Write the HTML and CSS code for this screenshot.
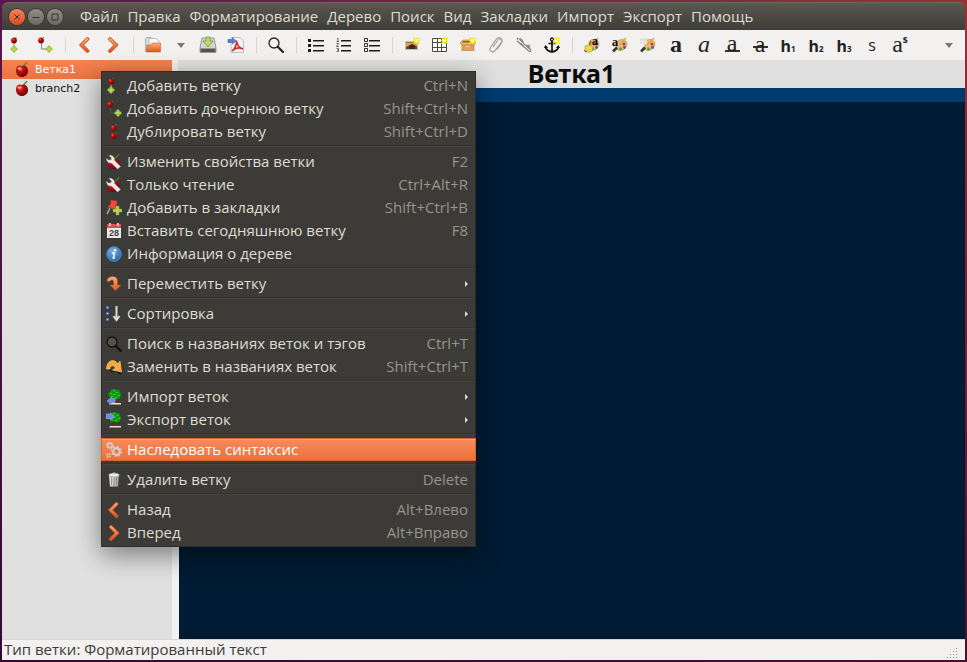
FILE: index.html
```html
<!DOCTYPE html>
<html lang="ru">
<head>
<meta charset="utf-8">
<title>Ветка1</title>
<link rel="stylesheet" href="styles.css">
</head>
<body>
<svg class="sprite" aria-hidden="true">
  <defs>
    <radialGradient id="red" cx=".35" cy=".3" r=".75"><stop offset="0" stop-color="#f05a50"/><stop offset=".35" stop-color="#c01010"/><stop offset="1" stop-color="#6c0000"/></radialGradient>
    <linearGradient id="orange" x1="0" y1="0" x2="0" y2="1"><stop offset="0" stop-color="#f9b27c"/><stop offset="1" stop-color="#e0521c"/></linearGradient>
    <linearGradient id="steel" x1="0" y1="0" x2="1" y2="0"><stop offset="0" stop-color="#e8e8e8"/><stop offset="1" stop-color="#9a9a9a"/></linearGradient>
    <radialGradient id="blue" cx=".4" cy=".3" r=".8"><stop offset="0" stop-color="#7db4e6"/><stop offset="1" stop-color="#1f5fa8"/></radialGradient>
  </defs>
  <symbol id="cherry" viewBox="0 0 16 16"><path d="M8 5Q10 4 13 0" fill="none" stroke="#4f8f28" stroke-width="1.500"/><path d="M8 4.200C4 2.400 2 5 2 9c0 3.400 2.500 6 5.900 6S14 12.500 14 9C14 5.500 11.500 2.800 8 4.200z" fill="url(#red)"/><ellipse cx="5.500" cy="6.500" rx="2" ry="1.200" fill="#fff" opacity=".5"/></symbol>
  <symbol id="plus" viewBox="0 0 8 8"><path d="M3 1h2v2h2v2H5v2H3V5H1V3h2z" fill="#b7db55" stroke="#9cc246"/></symbol>
  <symbol id="add" viewBox="0 0 16 16"><path d="M5 6v5" stroke="#999"/><path d="M5 2.500 7.500 0" stroke="#3f8a1c"/><circle cx="5" cy="3.500" r="2.900" fill="url(#red)"/><use href="#plus" x="1" y="8" width="8" height="8"/></symbol>
  <symbol id="add-child" viewBox="0 0 16 16"><path d="M4.500 6v6H9" fill="none" stroke="#888"/><path d="M4.500 2.500 7 0" stroke="#3f8a1c"/><circle cx="4" cy="3.500" r="2.900" fill="url(#red)"/><use href="#plus" x="8" y="8" width="8" height="8"/></symbol>
  <symbol id="add-child-dark" viewBox="0 0 16 16"><path d="M4.500 6v6H9" fill="none" stroke="#55534d"/><path d="M4.500 2.500 7 0" stroke="#3f8a1c"/><circle cx="4" cy="3.500" r="2.900" fill="url(#red)"/><use href="#plus" x="8" y="8" width="8" height="8"/></symbol>
  <symbol id="dup" viewBox="0 0 16 16"><path d="M8 3l3-3M8 11l3-3" stroke="#3f8a1c"/><circle cx="7.500" cy="4" r="3" fill="url(#red)"/><circle cx="7.500" cy="12" r="3" fill="url(#red)"/></symbol>
  <symbol id="wrench" viewBox="0 0 16 16"><path d="M9 5l4-5" stroke="#3f8a1c" stroke-width="1.300"/><circle cx="7.500" cy="9.500" r="5.800" fill="url(#red)"/><path d="M3 1.500 5.500 4 5 6 2.500 6 .5 4.500c0 3.500 2.500 5 5 4.500l6 6 3-2.500-6-6C9 3.500 6 .5 3 1.500z" fill="#ecece9" stroke="#aaa" stroke-width=".5"/></symbol>
  <symbol id="pin" viewBox="0 0 16 16"><path d="M4 8 1 14" stroke="#aaa" stroke-width="1.500"/><path d="M5 0l6 1v3L9.500 5.500 11 10 1.500 7l3-2.500z" fill="#f04a42" stroke="#b72a28" stroke-width=".5"/><path d="M10 6h3v3h3v3h-3v3h-3v-3H7V9h3z" fill="#b2d452" stroke="#7fa52f" stroke-width=".5"/></symbol>
  <symbol id="info" viewBox="0 0 16 16"><circle cx="8" cy="8" r="7.300" fill="url(#blue)" stroke="#4f87c0" stroke-width="1"/><circle cx="9.200" cy="4.200" r="1.200" fill="#fff"/><path d="M6 7h2.500l-1.200 5h1.700" fill="none" stroke="#fff" stroke-width="1.500"/></symbol>
  <symbol id="move" viewBox="0 0 16 16"><path d="M1 5C1-1 12-1 11.500 5v4H15l-5.500 6L4 9h3.500V6C7.500 3 4 3.500 3.500 6z" fill="url(#orange)" stroke="#a9441b" stroke-width=".5"/></symbol>
  <symbol id="sort" viewBox="0 0 16 16"><path d="M0 0h3v3H0zM0 6h3v3H0zM0 12h3v3H0z" fill="#3f6bc0"/><path d="M1 1h1v1H1zM1 7h1v1H1zM1 13h1v1H1z" fill="#fff"/><path d="M10.500 0v13M7.500 10l3 4 3-4" fill="none" stroke="#dcdcd6" stroke-width="2"/></symbol>
  <symbol id="search" viewBox="0 0 16 16"><circle cx="6" cy="6" r="5" fill="#fff" fill-opacity=".12" stroke="currentColor" stroke-width="1.300"/><path d="M10 10l5 5" stroke="currentColor" stroke-width="2.200" stroke-linecap="round"/></symbol>
  <symbol id="replace" viewBox="0 0 16 16"><circle cx="7" cy="8" r="4.500" fill="none" stroke="#111" stroke-width="1.200"/><path d="M10 11l5 4" stroke="#111" stroke-width="2"/><path d="M.5 10C1 1 8-1 12 5l2-3 1.500 11-9-2 3-2C8 6 4 6 4 10z" fill="#f9a83a" stroke="#ffd47e" stroke-width=".6"/></symbol>
  <symbol id="tree" viewBox="0 0 16 16"><path d="M4 14h11v1.500H3z" fill="#e8e5c0"/><path d="M9 6l-.5 8h3.500l-1.500-3z" fill="#6b2f14"/><path d="M3 7 2 4l2-1 1-2 3-1 3 1h2l1 2 1 3-1 3-3 1.500-3-1-3 1z" fill="#0a9a12"/><path d="M4 4h2v1H4zM7 1h2v1H7zM10 3h2v1h-2zM7 5h3v1H7zM12 6h2v1h-2zM5 7h2v1H5zM9 8h2v1H9z" fill="#32cf32"/></symbol>
  <symbol id="import" viewBox="0 0 16 16"><use href="#tree"/><path d="M9 9.500H5.500V8.500L1 12l4.500 3v-1.500H9z" fill="#6d8be4" stroke="#8fa8ee" stroke-width=".7"/></symbol>
  <symbol id="export" viewBox="0 0 16 16"><use href="#tree"/><path d="M0 2h4.500V1l4 3.500-4 3V6.500H0z" fill="#6d8be4" stroke="#8fa8ee" stroke-width=".7"/></symbol>
  <symbol id="gears" viewBox="0 0 16 16"><g fill="none" stroke="#d4d1cc"><circle cx="4" cy="3.500" r="2.300" stroke-width="1.600"/><circle cx="4" cy="3.500" r="3.400" stroke-width="1" stroke-dasharray="1.300 1.300"/><circle cx="10.500" cy="9.500" r="3.300" stroke-width="2.200"/><circle cx="10.500" cy="9.500" r="5" stroke-width="1.200" stroke-dasharray="2 1.900"/><circle cx="2.500" cy="13.500" r="1.600" stroke-width="1.600" stroke-dasharray="1.500 .8"/></g></symbol>
  <symbol id="trash" viewBox="0 0 16 16"><path d="M3 3.500h10l-1 11H4z" fill="url(#steel)"/><path d="M5.500 5v8M8 6v8M10.500 5v8" stroke="#888" stroke-width=".8"/><ellipse cx="8" cy="3" rx="5.300" ry="1.800" fill="#eee" stroke="#999" stroke-width=".5"/><path d="M6 1.800q2-2 4 0" fill="none" stroke="#ccc"/></symbol>
  <symbol id="left" viewBox="0 0 16 16"><path d="M10.500 2 4.500 8l6 6" fill="none" stroke="#cf5a26" stroke-width="3.800" stroke-linecap="round"/><path d="M10.500 2 4.500 8l6 6" fill="none" stroke="url(#orange)" stroke-width="1.800" stroke-linecap="round"/></symbol>
  <symbol id="right" viewBox="0 0 16 16"><path d="M5 2l6 6-6 6" fill="none" stroke="#cf5a26" stroke-width="3.800" stroke-linecap="round"/><path d="M5 2l6 6-6 6" fill="none" stroke="url(#orange)" stroke-width="1.800" stroke-linecap="round"/></symbol>
  <symbol id="star" viewBox="0 0 8 8"><path d="M4 0l1 2 2.500-1.500L6.200 3 8 4 6.200 5l1.300 2.500L5 6.200 4 8 3 6.200.5 7.500 1.800 5 0 4l1.800-1L.5.5 3 2z" fill="#f0ea20" stroke="#f0ea20" stroke-width=".8"/><circle cx="4" cy="4" r="1.700" fill="#fffec8"/></symbol>
  <symbol id="palette" viewBox="0 0 16 16"><path d="M5 5C7 1 15 2 15 7c0 6-9 9-11 4-.5-2 2-2 1-6z" fill="#e3bb77" stroke="#b78b43" stroke-width=".6"/><circle cx="8.500" cy="12" r="1.400" fill="#45a52b"/><circle cx="12.500" cy="10.500" r="1.400" fill="#2865c8"/><circle cx="12" cy="7" r="1.500" fill="#e22c16"/><path d="M14 1 7 8" stroke="#e0a04c" stroke-width="1.400"/><path d="M5 10.500 1 14.500" stroke="#373736" stroke-width="2.600"/></symbol>
</svg>

<div class="window">
  <header class="titlebar">
    <div class="controls">
      <button class="ctl close" aria-label="Закрыть"><svg viewBox="0 0 16 16"><path d="M5.500 5.500l5 5M10.500 5.500l-5 5"/></svg></button>
      <button class="ctl" aria-label="Свернуть"><svg viewBox="0 0 16 16"><path d="M4.500 8.500h7"/></svg></button>
      <button class="ctl" aria-label="Развернуть"><svg viewBox="0 0 16 16"><path d="M5 5h6v6H5z"/></svg></button>
    </div>
    <nav class="menubar">
      <button>Файл</button><button>Правка</button><button>Форматирование</button><button>Дерево</button><button>Поиск</button><button>Вид</button><button>Закладки</button><button>Импорт</button><button>Экспорт</button><button>Помощь</button>
    </nav>
  </header>

  <div class="toolbar">
    <button aria-label="Добавить ветку"><svg><use href="#add"/></svg></button>
    <button aria-label="Добавить дочернюю ветку"><svg><use href="#add-child"/></svg></button>
    <i class="sep"></i>
    <button aria-label="Назад"><svg><use href="#left"/></svg></button>
    <button aria-label="Вперед"><svg><use href="#right"/></svg></button>
    <i class="sep"></i>
    <button aria-label="Открыть"><svg viewBox="0 0 16 16"><path d="M.5 14V1.500L2 .5h4L7 2h2v12z" fill="#dddbd6" stroke="#999" stroke-width=".7"/><path d="M4 1.500h7l3 2.500v8H4z" fill="#fafafa" stroke="#aaa" stroke-width=".7"/><path d="M2 8h4l1-2h8.500V15H1z" fill="url(#orange)" stroke="#c9622c" stroke-width=".6"/></svg></button>
    <button class="drop" aria-label="Недавние документы"><i class="caret"></i></button>
    <button aria-label="Сохранить"><svg viewBox="0 0 16 16"><path d="M2 1h12l2 10v4.500H0V11z" fill="#d4d4d4" stroke="#777" stroke-width=".7"/><path d="M.5 11.500h15v3.500H.5z" fill="#555"/><path d="M6 0h4v4h3l-5 6-5-6h3z" fill="#b9df69" stroke="#69912e" stroke-width=".7"/></svg></button>
    <button aria-label="Экспорт в PDF"><svg viewBox="0 0 16 16"><path d="M3 .5h9L15.500 4v11.500H3z" fill="#f3f3f3" stroke="#aaa" stroke-width=".7"/><path d="M4 14C7 12 9 7 8.500 3.500 9 8 11 11 15 12 11 10 7 11 4 14z" fill="none" stroke="#d52a26" stroke-width="1.600"/><path d="M0 2.500h4.500V.5L8 4 4.500 7V5.500H0z" fill="#567bd0" stroke="#3253a0" stroke-width=".5"/></svg></button>
    <i class="sep"></i>
    <button aria-label="Поиск"><svg><use href="#search"/></svg></button>
    <i class="sep"></i>
    <button aria-label="Маркированный список"><svg viewBox="0 0 16 16"><path d="M0 2h3v3H0zM0 7h3v3H0zM0 12h3v3H0zM5 3h11v1.500H5zM5 8h11v1.500H5zM5 13h11v1.500H5z" fill="#1c1c1c"/></svg></button>
    <button aria-label="Нумерованный список"><svg viewBox="0 0 16 16"><path d="M5 3h10v1.500H5zM5 8h10v1.500H5zM5 13h10v1.500H5z" fill="#1c1c1c"/><path d="M1 1.500h1v3M.5 4.500h2.500M.5 6.500h2l-2 3h2.500M.5 11.500h2v3h-2M1 13h1.500" fill="none" stroke="#444" stroke-width=".8"/></svg></button>
    <button aria-label="Список задач"><svg viewBox="0 0 16 16"><path d="M.5 1.500h3v3h-3zM.5 6.500h3v3h-3zM.5 11.500h3v3h-3z" fill="none" stroke="#333"/><path d="M5 3h11v1.500H5zM5 8h11v1.500H5zM5 13h11v1.500H5z" fill="#1c1c1c"/></svg></button>
    <i class="sep"></i>
    <button aria-label="Вставить изображение"><svg viewBox="0 0 16 16"><path d="M1.500 4.500h12v8h-12z" fill="#5d4a30" stroke="#c4c0b8"/><path d="M2 5.500h11v4L8 7 2 10z" fill="#e5a048"/><path d="M5 12V9l3-2 3 1.500V12z" fill="#3b2c1d"/><use href="#star" x="9" y="0" width="7" height="7"/></svg></button>
    <button aria-label="Вставить таблицу"><svg viewBox="0 0 16 16"><path d="M.5 1.500h14v13H.500zM.5 5.500h14M.5 10.500h14M5.500 1.500v13M9.500 1.500v13" fill="#fff" stroke="#4a4a4a"/><use href="#star" x="9" y="0" width="7" height="7"/></svg></button>
    <button aria-label="Вставить блок кода"><svg viewBox="0 0 16 16"><path d="M2 7h12v6.500H2z" fill="#dfa355" stroke="#a86720" stroke-width=".5"/><path d="M0 6l3-3h10l3 3-2 2H2z" fill="#edb869" stroke="#b9762d" stroke-width=".6"/><path d="M3 4h10v1.500H2z" fill="#985d20"/><path d="M6 9h4v1H6z" fill="#f7dca8"/><use href="#star" x="9" y="0" width="7" height="7"/></svg></button>
    <button aria-label="Вложить файл"><svg viewBox="0 0 16 16"><path d="M5 10l5-7c2-2.500 5 0 3 2.500L7 13.500c-3 3-6.500 0-4.500-3L8.500 2c3-3 7 0 5 4l-4.500 6.500" fill="none" stroke="#a3a3a3" stroke-width="1.200"/></svg></button>
    <button aria-label="Вставить ссылку"><svg viewBox="0 0 16 16"><path d="M1 1l14 12M1 4l13 11M4 1l2 6 7 3 2 5M1 2l5 1 2 5 6 1" fill="none" stroke="#8a8a8a" stroke-width="1.500"/><path d="M2 2l12 12" stroke="#eee" stroke-width="1"/></svg></button>
    <button aria-label="Вставить якорь"><svg viewBox="0 0 16 16"><circle cx="8" cy="2.500" r="1.500" fill="none" stroke="#111" stroke-width="1.300"/><path d="M8 4v10.500M4.500 6.500h7M1.500 10C2.500 14 6 14.500 8 15c2-.5 5.500-1 6.500-5" fill="none" stroke="#111" stroke-width="1.700"/><path d="M0 11l1.500-3 2.500 3zM12 11l2.500-3 1.500 3z"/><use href="#star" x="9" y="0" width="7" height="7"/></svg></button>
    <i class="sep"></i>
    <button aria-label="Очистить форматирование"><svg viewBox="0 0 16 16"><use href="#palette"/><path d="M7 4 5 9" stroke="#8a6516" stroke-width="1.500"/><path d="M1 9l4-1 4 2-1 4-3 1.500-4-2z" fill="#ead64a" stroke="#b49a25" stroke-width=".6"/><text x="8" y="8" class="mini">a</text></svg></button>
    <button aria-label="Цвет текста"><svg viewBox="0 0 16 16"><use href="#palette"/><text x="0" y="9" class="mini">a</text></svg></button>
    <button aria-label="Цвет фона"><svg viewBox="0 0 16 16"><use href="#palette"/><path d="M0 1h7v6H0z" fill="#e4e3dc"/></svg></button>
    <button class="glyph bold" aria-label="Полужирный">a</button>
    <button class="glyph italic" aria-label="Курсив">a</button>
    <button class="glyph under" aria-label="Подчёркнутый">a</button>
    <button class="glyph strike" aria-label="Зачёркнутый">a</button>
    <button class="head">h<small>1</small></button>
    <button class="head">h<small>2</small></button>
    <button class="head">h<small>3</small></button>
    <button class="small">s</button>
    <button class="glyph super">a<sup>s</sup></button>
    <button class="drop more" aria-label="Ещё"><i class="caret"></i></button>
  </div>

  <main class="body">
    <aside class="tree">
      <div class="node active"><svg><use href="#cherry"/></svg>Ветка1</div>
      <div class="node"><svg><use href="#cherry"/></svg>branch2</div>
    </aside>
    <section class="editor">
      <h1>Ветка1</h1>
      <div class="line"></div>
      <div class="page"></div>
    </section>
  </main>

  <footer class="status">
    <span>Тип ветки: Форматированный текст</span>
    <svg class="grip" viewBox="0 0 12 12"><path d="M9 0h1v1H9zM6 3h1v1H6zM9 3h1v1H9zM3 6h1v1H3zM6 6h1v1H6zM9 6h1v1H9zM0 9h1v1H0zM3 9h1v1H3zM6 9h1v1H6zM9 9h1v1H9z"/></svg>
  </footer>
</div>

<div class="popup" role="menu">
  <button><svg><use href="#add"/></svg><span>Добавить ветку</span><kbd>Ctrl+N</kbd></button>
  <button><svg><use href="#add-child-dark"/></svg><span>Добавить дочернюю ветку</span><kbd>Shift+Ctrl+N</kbd></button>
  <button><svg><use href="#dup"/></svg><span>Дублировать ветку</span><kbd>Shift+Ctrl+D</kbd></button>
  <hr>
  <button><svg><use href="#wrench"/></svg><span>Изменить свойства ветки</span><kbd>F2</kbd></button>
  <button><svg><use href="#wrench"/></svg><span>Только чтение</span><kbd>Ctrl+Alt+R</kbd></button>
  <button><svg><use href="#pin"/></svg><span>Добавить в закладки</span><kbd>Shift+Ctrl+B</kbd></button>
  <button><svg viewBox="0 0 16 16"><path d="M1 1h14v14H1z" fill="#e9e9e9"/><path d="M1 1h14v4H1z" fill="#d9504c"/><path d="M4 0v3M12 0v3" stroke="#eee" stroke-width="1.500"/><text x="8" y="13" text-anchor="middle" class="cal-day">28</text></svg><span>Вставить сегодняшнюю ветку</span><kbd>F8</kbd></button>
  <button><svg><use href="#info"/></svg><span>Информация о дереве</span></button>
  <hr>
  <button><svg><use href="#move"/></svg><span>Переместить ветку</span><i class="arrow"></i></button>
  <hr>
  <button><svg><use href="#sort"/></svg><span>Сортировка</span><i class="arrow"></i></button>
  <hr>
  <button><svg><use href="#search"/></svg><span>Поиск в названиях веток и тэгов</span><kbd>Ctrl+T</kbd></button>
  <button><svg><use href="#replace"/></svg><span>Заменить в названиях веток</span><kbd>Shift+Ctrl+T</kbd></button>
  <hr>
  <button><svg><use href="#import"/></svg><span>Импорт веток</span><i class="arrow"></i></button>
  <button><svg><use href="#export"/></svg><span>Экспорт веток</span><i class="arrow"></i></button>
  <hr>
  <button class="hover"><svg><use href="#gears"/></svg><span>Наследовать синтаксис</span></button>
  <hr>
  <button><svg><use href="#trash"/></svg><span>Удалить ветку</span><kbd>Delete</kbd></button>
  <hr>
  <button><svg><use href="#left"/></svg><span>Назад</span><kbd>Alt+Влево</kbd></button>
  <button><svg><use href="#right"/></svg><span>Вперед</span><kbd>Alt+Вправо</kbd></button>
</div>
</body>
</html>
```
FILE: styles.css
```css
* { box-sizing: border-box; }
body {
  margin: 0;
  height: 100vh;
  padding: 2px;
  background: linear-gradient(rgba(40, 0, 45, 0), rgba(40, 0, 45, .7)), linear-gradient(90deg, #57184c, #7c2740 60%, #9b2f33);
  font: 15px/20px "Open Sans", "Noto Sans", sans-serif;
  color: #3c3b37;
  overflow: hidden;
}
button {
  margin: 0;
  padding: 0;
  border: 0;
  background: none;
  font: inherit;
  color: inherit;
}
.sprite { position: absolute; width: 0; height: 0; }

.window { display: flex; flex-direction: column; height: 100%; }

.titlebar {
  flex: none;
  display: flex;
  align-items: center;
  height: 28px;
  padding-left: 7px;
  border-top: 1px solid #6b685f;
  border-radius: 6px 6px 0 0;
  background: linear-gradient(#5a5850, #3d3c37);
}
.controls { display: flex; gap: 3px; }
.ctl {
  width: 16px;
  height: 16px;
  border-radius: 50%;
  background: linear-gradient(#8f8d85, #6b6962);
  box-shadow: 0 0 0 1px #38372f;
}
.ctl.close { background: linear-gradient(#f5835d, #dd4a1e); }
.ctl svg { display: block; width: 16px; height: 16px; fill: none; stroke: #35342f; stroke-width: 1; }
.menubar { display: flex; gap: 9px; margin-left: 17px; padding-bottom: 2px; color: #dfdbd2; }

.toolbar {
  flex: none;
  display: flex;
  align-items: center;
  height: 30px;
  padding-left: 1px;
  background: #f2f1f0;
  color: #222;
}
.toolbar button {
  flex: 0 1 28px;
  height: 28px;
  display: flex;
  align-items: center;
  justify-content: center;
}
.toolbar svg { width: 16px; height: 16px; overflow: visible; }
.sep {
  width: 12px;
  height: 16px;
  background: linear-gradient(#d8d6d3, #d8d6d3) center / 1px 100% no-repeat;
}
.toolbar .drop { flex-basis: 27px; }
.toolbar .more { margin-left: auto; margin-right: 3px; }
.caret {
  border: 4px solid transparent;
  border-top: 5px solid #777;
  border-bottom: 0;
}
.toolbar .glyph { font: 24px/24px "Liberation Serif", serif; padding-bottom: 2px; }
.toolbar .bold { font-weight: bold; }
.toolbar .italic { font-style: italic; }
.toolbar .under {
  padding-bottom: 4px;
  background: linear-gradient(#333, #333) center 19px / 15px 2px no-repeat;
}
.toolbar .strike { background: linear-gradient(#333, #333) center 15px / 15px 2px no-repeat; }
.toolbar .head { font: bold 16px/20px "Noto Sans", sans-serif; align-items: baseline; padding-top: 5px; }
.head small { font-size: 8px; }
.toolbar .small { font-size: 16px; }
.super sup { align-self: flex-start; font: bold 10px/16px "Noto Sans", sans-serif; }
.mini { font: bold 12px "Liberation Serif", serif; }
.cal-day { font: bold 9px "Liberation Sans", sans-serif; fill: #444; }

.body { flex: 1; display: flex; min-height: 0; background: #f2f1f0; }
.tree {
  flex: 0 0 170px;
  background: #e0e0e0;
  font: 11px/19px "DejaVu Sans", sans-serif;
  color: #111;
}
.node { display: flex; align-items: center; gap: 5px; height: 19px; padding-left: 12px; }
.node svg { width: 16px; height: 16px; }
.node.active { background: linear-gradient(#f58350, #ec7240); color: #fff; }
.editor { flex: 1; display: flex; flex-direction: column; margin-left: 6px; }
.editor h1 {
  margin: 0;
  height: 28px;
  background: #e0e0e0;
  font: bold 25px/26px "Noto Sans", sans-serif;
  color: #0b0b0b;
  text-align: center;
}
.line { height: 14px; margin-left: 1px; background: #003b70; }
.page { flex: 1; margin-left: 1px; background: #001b33; }

.status {
  flex: none;
  display: flex;
  align-items: center;
  justify-content: space-between;
  height: 21px;
  padding: 0 6px 0 2px;
  border-top: 1px solid #d8d6d3;
  background: #f2f1f0;
}
.status span { padding-bottom: 2px; }
.grip { width: 12px; height: 12px; align-self: flex-end; fill: #8a8883; }

.popup {
  position: absolute;
  left: 101px;
  top: 71px;
  width: 375px;
  padding: 2px 0;
  border: 1px solid #2e2d29;
  background: #3c3b37;
  color: #dfdbd2;
  box-shadow: 0 8px 24px rgba(0, 0, 0, .45);
}
.popup button {
  display: flex;
  align-items: center;
  gap: 5px;
  width: 100%;
  height: 23px;
  padding: 0 7px 0 4px;
  text-align: left;
}
.popup svg { flex: none; width: 16px; height: 16px; color: #111; }
.popup span { flex: 1; padding-bottom: 2px; white-space: nowrap; }
.popup kbd { padding-bottom: 2px; font: inherit; color: #97948c; }
.popup hr {
  height: 2px;
  margin: 2px 1px 3px;
  border: 0;
  border-top: 1px solid #33322e;
  border-bottom: 1px solid #45443f;
}
.popup .hover {
  width: calc(100% + 2px);
  margin: 0 -1px;
  padding: 0 8px 0 5px;
  background: linear-gradient(#f98c5e, #ea6f3c);
  box-shadow: inset 0 0 0 1px #d9622f, inset 0 2px 0 #ffa27a;
  color: #fff;
}
.arrow { border: 3px solid transparent; border-left: 3px solid #dfdbd2; border-right: 0; }
```
